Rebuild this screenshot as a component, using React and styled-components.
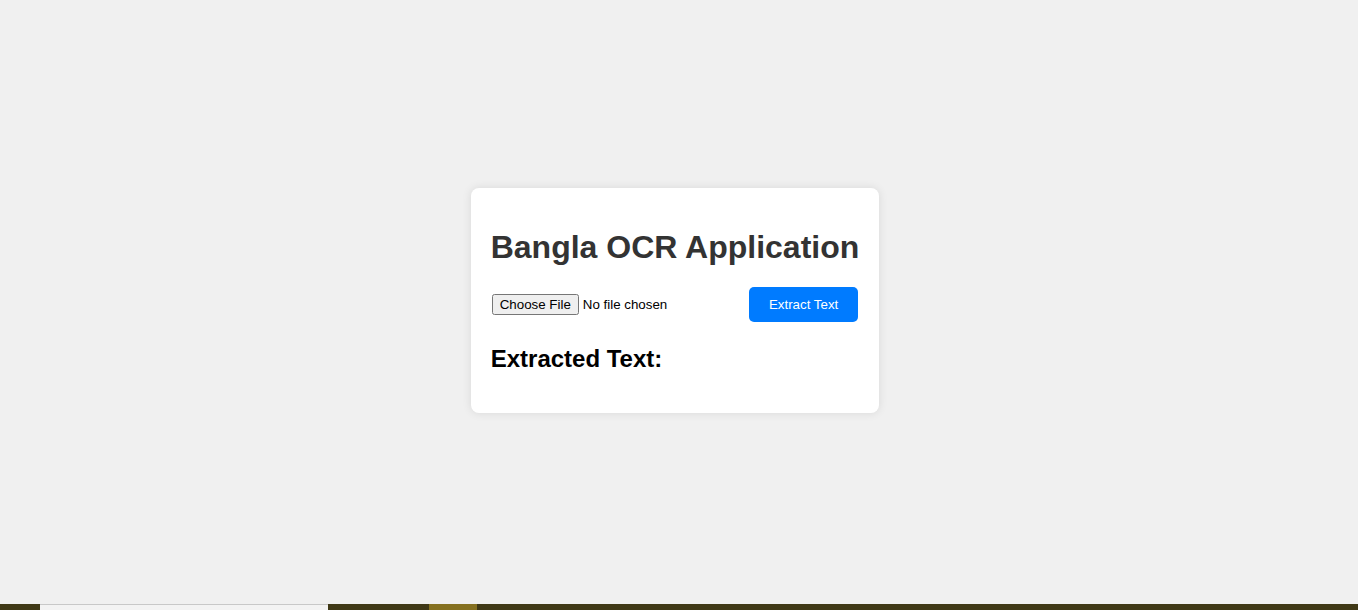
import React from 'react';
import styled, { createGlobalStyle } from 'styled-components';

const GlobalStyle = createGlobalStyle`
  html, body {
    margin: 0;
    padding: 0;
    height: 100%;
  }
  body {
    background-color: #f0f0f0;
    font-family: Arial, "Liberation Sans", sans-serif;
  }
  #root {
    height: 100%;
  }
`;

const Page = styled.div`
  height: 100%;
  display: flex;
  flex-direction: column;
`;

const Main = styled.main`
  flex: 1;
  display: flex;
  align-items: center;
  justify-content: center;
  padding-right: 8px;
  padding-bottom: 3px;
`;

const Card = styled.div`
  background: #fff;
  padding: 20px;
  border-radius: 8px;
  box-shadow: 0 0 10px rgba(0, 0, 0, 0.1);
`;

const Title = styled.h1`
  font-size: 32px;
  color: #333;
  margin: 21px 0;
  font-weight: bold;
  white-space: nowrap;
`;

const UploadRow = styled.div`
  display: flex;
  align-items: center;
  justify-content: space-between;
`;

const FileInput = styled.input`
  margin-left: 1px;
  font-family: Arial, "Liberation Sans", sans-serif;
  font-size: 13.33px;
  color: #000;
`;

const ExtractButton = styled.button`
  margin-right: 1px;
  background-color: #007bff;
  color: #fff;
  border: none;
  border-radius: 5px;
  padding: 10px 20px;
  font-family: Arial, "Liberation Sans", sans-serif;
  font-size: 13.33px;
  cursor: pointer;
`;

const ResultTitle = styled.h2`
  font-size: 24px;
  color: #000;
  margin: 23px 0 20px;
`;

const Taskbar = styled.div`
  height: 6px;
  display: flex;
  background: #3f3816;
`;

const TaskSlot = styled.div`
  width: ${p => p.$w}px;
  background: ${p => p.$bg || 'transparent'};
  border-top: ${p => (p.$light ? '1px solid #c8c8c8' : 'none')};
`;

export default function App() {
  return (
    <>
      <GlobalStyle />
      <Page>
        <Main>
          <Card>
            <Title>Bangla OCR Application</Title>
            <UploadRow>
              <FileInput type="file" />
              <ExtractButton>Extract Text</ExtractButton>
            </UploadRow>
            <ResultTitle>Extracted Text:</ResultTitle>
          </Card>
        </Main>
        <Taskbar>
          <TaskSlot $w={40} />
          <TaskSlot $w={288} $bg="#f3f3f3" $light />
          <TaskSlot $w={101} />
          <TaskSlot $w={48} $bg="#857020" />
        </Taskbar>
      </Page>
    </>
  );
}
